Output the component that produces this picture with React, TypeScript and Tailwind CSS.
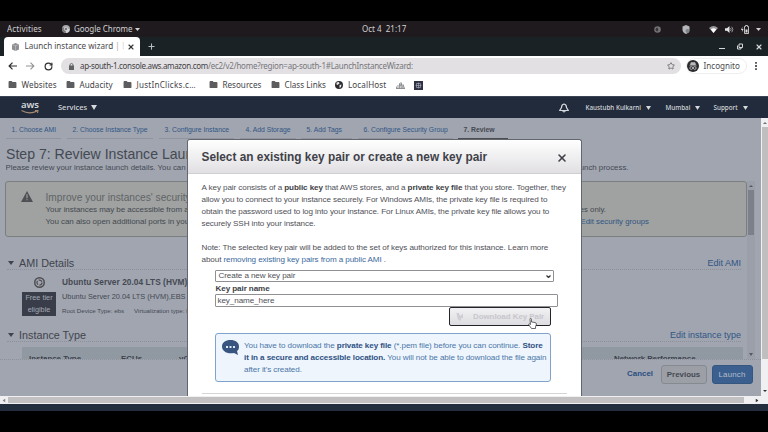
import type { ReactNode } from "react";
import { Star, RotateCw, Plus, X } from "lucide-react";

const UI = "font-['Noto_Sans',sans-serif]";
const LINK = "text-[#315584]";

function Down({ className = "" }: { className?: string }) {
  return (
    <svg viewBox="0 0 10 8" className={className} fill="currentColor" preserveAspectRatio="none">
      <path d="M0 0H10L5 8Z" />
    </svg>
  );
}

function Folder({ label, width, text }: { label: string; width: string; text: string }) {
  return (
    <div className={`flex shrink-0 items-center ${width}`}>
      <svg viewBox="0 0 9 8" className="mr-[4.5px] h-[7px] w-[9px]" fill="#5d5d60">
        <path d="M0 1Q0 0 1 0H3.6L4.6 1.2H8Q9 1.2 9 2.2V7Q9 8 8 8H1Q0 8 0 7Z" />
      </svg>
      <span className={text}>{label}</span>
    </div>
  );
}

function SystemBar() {
  return (
    <div className={`flex h-[16px] items-center bg-[#1e1a1e] text-[8px] leading-[16px] text-[#d2d0d2] ${UI}`}>
      <span className="w-[55px] pl-[7px] tracking-[0.15px]">Activities</span>
      <svg viewBox="0 0 16 16" className="ml-[7px] h-[8px] w-[8px]">
        <circle cx="8" cy="8" r="8" fill="#a9a8aa" />
        <path d="M8 8L1 4A8 8 0 0 0 7 16Z" fill="#77767a" />
        <path d="M8 8H15A8 8 0 0 1 8 16Z" fill="#d5d4d6" />
        <circle cx="8" cy="8" r="3.4" fill="#77767a" stroke="#eee" strokeWidth="1.2" />
      </svg>
      <span className="ml-[4px] w-[61px] tracking-[-0.05px]">Google Chrome</span>
      <Down className="h-[3px] w-[5px]" />
      <span className="ml-[222px] w-[150px] whitespace-pre">Oct 4  21:17</span>
      <div className="ml-[142px] flex items-center">
        <svg viewBox="0 0 14 14" className="h-[7px] w-[7px]">
          <circle cx="7" cy="7" r="6.5" fill="#777478" />
          <path d="M7 3A4 4 0 0 0 7 11L9 8Z" fill="#3b383c" />
        </svg>
        <svg viewBox="0 0 16 18" className="ml-[21px] h-[9px] w-[8px]">
          <path d="M8 0L15 3V9Q15 15 8 18Q1 15 1 9V3Z" fill="#b4b6ba" />
          <circle cx="11" cy="12" r="4" fill="#7d858c" />
        </svg>
        <svg viewBox="0 0 18 14" className="ml-[19px] h-[7px] w-[9px]">
          <path d="M0 4Q9 -4 18 4L9 14Z" fill="#9a989b" />
          <path d="M3.5 6.5Q9 2 14.5 6.5L9 14Z" fill="#fff" />
        </svg>
        <svg viewBox="0 0 18 14" className="ml-[7px] h-[7px] w-[9px]" fill="#e6e5e6">
          <path d="M0 4.5H4L9 0V14L4 9.5H0Z" />
          <path d="M11 4Q13.5 7 11 10M13.5 1.5Q18 7 13.5 12.5" fill="none" stroke="#aaa" strokeWidth="1.7" />
        </svg>
        <svg viewBox="0 0 16 18" className="ml-[7px] h-[9px] w-[8px]">
          <path d="M3 3L0 10H2.5L1.5 15L5 8H2.5Z" fill="#ddd" />
          <path d="M9 1H13V3H15V17H7V3H9Z" fill="none" stroke="#ddd" strokeWidth="1.7" />
          <path d="M9 9H13V15H9Z" fill="#ddd" />
        </svg>
        <Down className="ml-[7px] h-[3px] w-[5px]" />
      </div>
    </div>
  );
}

function TabStrip() {
  return (
    <div className={`flex h-[19px] bg-[#1b2226] pl-[4px] ${UI}`}>
      <div className="flex h-[19px] w-[136px] items-center rounded-t-[4px] bg-white pl-[7px] text-[8.1px] text-[#4a4a4d]">
        <svg viewBox="0 0 16 16" className="h-[8px] w-[9px]">
          <path d="M8 0L15 3V13L8 16L1 13V3Z" fill="#8f8f91" />
          <path d="M8 5V16M1 3L8 5.5L15 3" stroke="#c5c5c7" fill="none" strokeWidth="1.3" />
        </svg>
        <span className="ml-[4.5px] w-[99px] overflow-hidden whitespace-nowrap">
          Launch instance wizard <span className="text-[#aaa]">| </span>
          <span className="text-[#ddd]">E</span>
        </span>
        <X className="ml-[3px] h-[8px] w-[8px] text-[#333]" strokeWidth={3.2} />
      </div>
      <Plus className="mt-[5px] ml-[7px] h-[9px] w-[9px] text-[#b9bdbf]" strokeWidth={2.8} />
      <div className="ml-auto flex items-center pr-[5px] text-[#d4d6d7]">
        <div className="mt-[4px] h-[1.5px] w-[6px] bg-current" />
        <svg viewBox="0 0 12 12" className="ml-[12px] h-[7px] w-[6px]" fill="none" stroke="currentColor" strokeWidth="2">
          <path d="M4 1H11V8H4ZM1 4V11H8V8" />
        </svg>
        <X className="ml-[12px] h-[8px] w-[8px]" strokeWidth={3.5} />
      </div>
    </div>
  );
}

function Toolbar() {
  return (
    <div className={`flex h-[20px] items-center bg-white ${UI}`}>
      <svg viewBox="0 0 16 14" className="ml-[8px] h-[8px] w-[9px]" fill="none" stroke="#2f2f31" strokeWidth="2.2">
        <path d="M16 7H2M8 1L2 7L8 13" />
      </svg>
      <svg viewBox="0 0 16 14" className="ml-[9px] h-[8px] w-[9px]" fill="none" stroke="#949496" strokeWidth="2">
        <path d="M0 7H14M8 1L14 7L8 13" />
      </svg>
      <RotateCw className="ml-[9px] h-[9px] w-[9px] text-[#2f2f31]" strokeWidth={3.2} />
      <div className="ml-[8px] flex h-[16px] w-[620px] items-center rounded-full bg-[#e2e0e3] pl-[8px] text-[8px] text-[#77777b]">
        <svg viewBox="0 0 10 14" className="h-[7px] w-[5px]">
          <path d="M0 5H10V14H0Z" fill="#626265" />
          <path d="M2 6V4Q2 1 5 1T8 4V6" fill="none" stroke="#626265" strokeWidth="1.7" />
        </svg>
        <span className="ml-[6px] w-[587px] whitespace-nowrap tracking-[-0.25px]">
          <span className="tracking-[-0.33px] text-[#424246]">ap-south-1.console.aws.amazon.com</span>/ec2/v2/home?region=ap-south-1#LaunchInstanceWizard:
        </span>
        <Star className="h-[8px] w-[8px] shrink-0 text-[#666]" strokeWidth={2.5} />
      </div>
      <div className="ml-[5px] flex h-[16px] w-[61px] items-center rounded-full border border-[#eeeef0] text-[8.1px] text-[#4a4a4e]">
        <svg viewBox="0 0 24 24" className="h-[12px] w-[12px] shrink-0">
          <circle cx="12" cy="12" r="12" fill="#2b2b2e" />
          <path d="M8 5H16L17.5 10H6.5ZM4.5 11.5H19.5" fill="#bbb" stroke="#bbb" />
          <circle cx="8.5" cy="16" r="2.8" fill="none" stroke="#ccc" strokeWidth="1.5" />
          <circle cx="15.5" cy="16" r="2.8" fill="none" stroke="#ccc" strokeWidth="1.5" />
        </svg>
        <span className="ml-[4.5px]">Incognito</span>
      </div>
      <svg viewBox="0 0 2 9" className="ml-[8px] h-[8px] w-[2px]" fill="#4a4a4d">
        <path d="M0 0H2V2H0ZM0 3.5H2V5.5H0ZM0 7H2V9H0Z" />
      </svg>
    </div>
  );
}

function Bookmarks() {
  return (
    <div className={`flex h-[20px] items-center bg-white pb-[2px] pl-[8px] text-[8.1px] text-[#444448] ${UI}`}>
      <Folder label="Websites" width="w-[58px]" text="tracking-[0.12px]" />
      <Folder label="Audacity" width="w-[57px]" text="tracking-[0.05px]" />
      <Folder label="JustInClicks.c…" width="w-[86px]" text="tracking-[0.25px]" />
      <Folder label="Resources" width="w-[62px]" text="" />
      <Folder label="Class Links" width="w-[64px]" text="tracking-[0.03px]" />
      <svg viewBox="0 0 16 16" className="h-[8px] w-[8px]">
        <circle cx="8" cy="8" r="8" fill="#2c2c2f" />
        <path d="M3 3L8 2L9 5L5 8L3 7ZM9 8L13 7L12 12L9 14Z" fill="#e8e8e8" />
      </svg>
      <span className="ml-[5px] w-[48px] tracking-[0.1px]">LocalHost</span>
      <svg viewBox="0 0 18 14" className="h-[7px] w-[9px]" fill="none" stroke="#77777a" strokeWidth="1.5">
        <path d="M1 13V9M4 13V6M7 13V3L9 8M10 13V1L12 9V13M14 13V5L17 13M0 13H18" />
      </svg>
      <svg viewBox="0 0 18 18" className="ml-[9px] h-[9px] w-[9px]">
        <path d="M0 0H18V18H0Z" fill="#2e3244" />
        <path d="M9 3V15M3 9H15M5 5H13V13H5Z" stroke="#a7abb9" fill="none" strokeWidth="1.3" />
      </svg>
    </div>
  );
}

function AwsNav() {
  return (
    <div className={`flex h-[22px] items-center border-t border-[#3c4454] bg-[#222b3b] text-[#d5d8dc] ${UI}`}>
      <div className="ml-[21px] flex w-[37px] flex-col">
        <span className="h-[8px] text-[9.5px] leading-[6px] font-semibold tracking-[-0.1px]">aws</span>
        <svg viewBox="0 0 36 8" className="h-[4px] w-[18px]" fill="none" stroke="#a58b74" strokeWidth="2.2">
          <path d="M1 1Q17 10 32 2M28 1H34L33 6" />
        </svg>
      </div>
      <span className="w-[33px] text-[7.5px] font-medium">Services</span>
      <Down className="h-[5px] w-[6px]" />
      <svg viewBox="0 0 20 20" className="ml-[462px] h-[10px] w-[10px]" fill="none" stroke="currentColor" strokeWidth="2.4">
        <path d="M10 2Q5 3 5 9L1.5 15H18.5L15 9Q15 3 10 2ZM7 15Q10 21 13 15" />
      </svg>
      <div className="ml-[16.5px] flex items-center text-[6.3px] font-medium">
        <span className="w-[60px]">Kaustubh Kulkarni</span>
        <Down className="h-[4px] w-[5px]" />
        <span className="ml-[15px] w-[29px]">Mumbai</span>
        <Down className="h-[4px] w-[5px]" />
        <span className="ml-[14px] w-[29px]">Support</span>
        <Down className="h-[4px] w-[5px]" />
      </div>
    </div>
  );
}

const steps: [string, string, string, boolean][] = [
  ["1. Choose AMI", "w-[55px]", "w-[61px]", false],
  ["2. Choose Instance Type", "w-[86px]", "w-[92px]", false],
  ["3. Configure Instance", "w-[75px]", "w-[81px]", false],
  ["4. Add Storage", "w-[56px]", "w-[61px]", false],
  ["5. Add Tags", "w-[51px]", "w-[57px]", false],
  ["6. Configure Security Group", "w-[95px]", "w-[100px]", false],
  ["7. Review", "w-[50px]", "w-[52px]", true],
];

function SectionHead({ title, edit }: { title: string; edit: string }) {
  return (
    <div className="mr-[6px] ml-[7px] flex h-[15px] shrink-0 items-end border-b border-dotted border-[#8b909b] leading-[12px] text-[#41444c]">
      <Down className="mb-[4px] ml-[1px] h-[4px] w-[6px]" />
      <span className="ml-[5px] text-[10.8px]">{title}</span>
      <span className={`ml-auto text-[9px] ${LINK}`}>{edit}</span>
    </div>
  );
}

function ReviewPage() {
  return (
    <div className="flex h-[278px] w-[761px] flex-col bg-[#a0a5b0] text-[#454952]">
      <div className="flex h-[21px] pl-[6px] text-[6.8px]">
        {steps.map(([label, line, cell, active]) => (
          <div key={label} className={cell}>
            <div
              className={`h-[21px] border-b pl-[5.5px] leading-[23px] whitespace-nowrap ${line} ${
                active ? "border-[#4b4c50] font-bold text-[#454952]" : "border-[#91949c] text-[#315584]"
              }`}
            >
              {label}
            </div>
          </div>
        ))}
      </div>
      <div className="mt-[7px] h-[16px] pl-[6px] text-[14.1px] leading-[16px] whitespace-nowrap">Step 7: Review Instance Launch</div>
      <div className="flex h-[19px] pl-[5.5px] text-[7.85px] leading-[11px] whitespace-nowrap">
        <span className="w-[485px] overflow-hidden">Please review your instance launch details. You can go back to edit changes for each section. Click</span>
        <span className="w-[138px] text-right">complete the launch process.</span>
      </div>
      <div className="flex h-[178px]">
        <div className="flex w-[747px] flex-col overflow-hidden">
          <div className="ml-[5px] flex h-[56px] shrink-0 rounded-[3px] border border-[#7c7f80] bg-[#9fa2a0]">
            <svg viewBox="0 0 22 20" className="mt-[9px] ml-[15px] h-[11px] w-[12px]">
              <path d="M11 0L22 20H0Z" fill="#4e5053" />
              <path d="M10 6H12V13H10ZM10 15H12V17H10Z" fill="#a4a7a5" />
            </svg>
            <div className="ml-[12.5px] w-[480px] pt-[9px] text-[8px] leading-[12px] whitespace-nowrap">
              <div className="h-[13px] text-[10.2px] leading-[13px] text-[#606468]">Improve your instances' security. Your security group is open to the world.</div>
              <div className="tracking-[-0.05px]">Your instances may be accessible from any IP address. We recommend that you update your security group</div>
              <div className="tracking-[-0.05px]">You can also open additional ports in your security group to facilitate access to the application.</div>
            </div>
            <div className="mt-[22px] ml-auto mr-[97px] text-right text-[7.8px] leading-[12px] whitespace-nowrap">
              <div className="pr-[43px]">IP addresses only.</div>
              <div className={LINK}>Edit security groups</div>
            </div>
          </div>
          <div className="mt-[18px] shrink-0">
            <SectionHead title="AMI Details" edit="Edit AMI" />
          </div>
          <div className="flex h-[57px] shrink-0 pt-[7px] pl-[22px] whitespace-nowrap">
            <div className="flex w-[34px] flex-col items-center">
              <svg viewBox="0 0 22 22" className="h-[11px] w-[11px]">
                <circle cx="11" cy="11" r="9.5" fill="#a0a5b0" stroke="#4e4c50" strokeWidth="3" />
                <circle cx="11" cy="11" r="5" fill="none" stroke="#4e4c50" strokeWidth="2.5" strokeDasharray="8 2.5" />
              </svg>
              <div className="mt-[4px] h-[24px] w-[34px] bg-[#393d4a] text-center text-[7.3px] leading-[12px] text-[#a3a8b3]">
                Free tier
                <br />
                eligible
              </div>
            </div>
            <div className="pl-[6px]">
              <div className="h-[12px] text-[8.3px] leading-[11px] font-bold tracking-[0.05px]">Ubuntu Server 20.04 LTS (HVM), SSD Volume Type</div>
              <div className="mt-[1px] h-[14px] text-[7.4px] leading-[14px]">Ubuntu Server 20.04 LTS (HVM),EBS General Purpose (SSD) Volume Type.</div>
              <div className="mt-px flex text-[6.2px] leading-[12px]">
                <span className="w-[72px]">Root Device Type: ebs</span>
                <span>Virtualization type: hvm</span>
              </div>
            </div>
          </div>
          <SectionHead title="Instance Type" edit="Edit instance type" />
          <div className="mt-[5px] mr-[4px] ml-[22px] flex h-[12px] shrink-0 overflow-hidden bg-[#9099a2] pl-[7px] text-[7.9px] leading-[23px] font-bold text-[#3c414b]">
            <span className="w-[92px]">Instance Type</span>
            <span className="w-[58px]">ECUs</span>
            <span className="w-[435px]">vCPUs</span>
            <span>Network Performance</span>
          </div>
        </div>
        <div className="flex w-[8px] flex-col items-center bg-[#9a9fa9] text-[#555962]">
          <Down className="mt-[4px] h-[2px] w-[4px] rotate-180" />
          <div className="mt-[3px] h-[45px] w-[6px] bg-[#7c8089]" />
          <Down className="mt-auto mb-[3px] h-[3px] w-[4px]" />
        </div>
      </div>
      <div className="flex h-[37px] items-start justify-end border-t border-dotted border-[#8b909b] pt-[5px] pr-[8.5px] text-[7.9px] leading-[18px] font-bold">
        <span className="mr-[7.5px] text-[#2a4f81]">Cancel</span>
        <span className="mr-[5px] h-[19px] w-[46px] rounded-[3px] border border-[#858990] bg-[#9ca0a6] text-center">Previous</span>
        <span className="h-[19px] w-[41px] rounded-[3px] border border-[#35577f] bg-[#3b608f] text-center font-normal tracking-[0.2px] text-[#b3bdcb]">Launch</span>
      </div>
    </div>
  );
}

function B({ children }: { children: ReactNode }) {
  return <span className="font-bold text-[#3e3f46]">{children}</span>;
}

function KeyPairDialog() {
  return (
    <div className="absolute top-[21px] left-[187px] flex h-[257px] w-[395px] flex-col rounded-t-[3px] border border-b-0 border-[#62666e] bg-white text-[8.1px] leading-[11.9px] tracking-[-0.093px] whitespace-nowrap text-[#505058]">
      <div className="flex h-[34px] shrink-0 items-center justify-between rounded-t-[3px] border-b border-[#cfced2] bg-linear-to-b from-white to-[#e1dfe2] pr-[13px] pl-[13.5px] text-[#404148]">
        <span className="pt-[3px] text-[11.85px] font-bold tracking-normal">Select an existing key pair or create a new key pair</span>
        <X className="mt-[2px] h-[12px] w-[12px]" strokeWidth={3.2} />
      </div>
      <div className="pt-[8px] pl-[13.5px]">
        <div>A key pair consists of a <B>public key</B> that AWS stores, and a <B>private key file</B> that you store. Together, they</div>
        <div>allow you to connect to your instance securely. For Windows AMIs, the private key file is required to</div>
        <div>obtain the password used to log into your instance. For Linux AMIs, the private key file allows you to</div>
        <div>securely SSH into your instance.</div>
        <div className="mt-[12px]">Note: The selected key pair will be added to the set of keys authorized for this instance. Learn more</div>
        <div>about <span className="text-[#3d699d]">removing existing key pairs from a public AMI</span> .</div>
      </div>
      <div className="ml-[27px] pt-[5px]">
        <div className="flex h-[12px] w-[339px] items-center justify-between rounded-[1px] border border-[#8f8f94] pr-[2px] pl-[2.5px]">
          <span>Create a new key pair</span>
          <svg viewBox="0 0 10 6" className="h-[3px] w-[5px]" fill="none" stroke="#333" strokeWidth="2.5">
            <path d="M1 1L5 5L9 1" />
          </svg>
        </div>
        <div className="h-[12px] pl-[0.5px] leading-[13px]"><B>Key pair name</B></div>
        <div className="h-[13px] w-[343px] rounded-[1px] border border-[#8f8f94] pl-[1.5px] leading-[11px]">key_name_here</div>
        <div className="relative ml-[234px] flex h-[19px] w-[102px] items-center rounded-[2px] border-[1.5px] border-[#242428] bg-linear-to-b from-[#f1f0f2] to-[#dddce0] pl-[6px] text-[7.9px] font-bold text-[#c8c7cc]">
          <svg viewBox="0 0 18 18" className="h-[9px] w-[9px]" fill="#cfced3">
            <path d="M1 2H6V4L9 8L14 3V12H10V17H6L3 12Z" />
          </svg>
          <span className="ml-[8px] tracking-[-0.02px]">Download Key Pair</span>
          <svg viewBox="0 0 20 22" className="absolute top-[10px] left-[77px] h-[11px] w-[11px]">
            <path d="M6 1Q8 1 8 3V8L15 9Q18 10 18 12L16 18V21H8L2 13Q2 10 6 13L5 3Q5 1 6 1Z" fill="#fff" stroke="#444" strokeWidth="1.6" />
          </svg>
        </div>
        <div className="mt-[7px] flex h-[49px] w-[336px] rounded-[3px] border border-[#7fa3cb] bg-[#eef5fc] pt-[6px] pl-[6px] text-[#4b75a8]">
          <svg viewBox="0 0 34 30" className="h-[15px] w-[17px]">
            <path d="M17 0C27 0 34 5 34 13C34 17 33 20 30 22L32 30L24 26C10 29 0 22 0 13C0 5 7 0 17 0Z" fill="#38557f" />
            <path d="M8 12H12V16H8ZM15 12H19V16H15ZM22 12H26V16H22Z" fill="#dce8f5" />
          </svg>
          <div className="pl-[5px]">
            <div>You have to download the <b className="text-[#2f5183]">private key file</b> (*.pem file) before you can continue. <b className="text-[#2f5183]">Store</b></div>
            <div><b className="text-[#2f5183]">it in a secure and accessible location.</b> You will not be able to download the file again</div>
            <div>after it's created.</div>
          </div>
        </div>
      </div>
      <div className="mt-[11px] ml-[14px] h-px w-[365px] bg-[#d5d5d8]" />
    </div>
  );
}

export default function App() {
  return (
    <div className="flex h-[432px] w-[768px] flex-col overflow-hidden bg-black pt-[21px] font-['Liberation_Sans',Arial,sans-serif]">
      <SystemBar />
      <TabStrip />
      <Toolbar />
      <Bookmarks />
      <AwsNav />
      <div className="relative flex h-[278px]">
        <ReviewPage />
        <div className="flex w-[7px] flex-col items-center bg-[#f0f0f2] text-[#707074]">
          <Down className="mt-[4px] h-[2px] w-[4px] rotate-180" />
          <div className="mt-[3px] h-[232px] w-[6px] bg-[#c1bebf]" />
          <Down className="mt-auto mb-[4px] h-[2px] w-[4px] text-[#333]" />
        </div>
        <KeyPairDialog />
      </div>
      <div className="flex h-[8px] items-center bg-[#f0f0f2]">
        <Down className="ml-[2px] h-[3px] w-[4px] rotate-90 text-[#88888c]" />
        <div className="ml-[2px] h-[6px] w-[736px] bg-[#c3c0c2]" />
        <Down className="ml-[11px] h-[3px] w-[4px] -rotate-90 text-[#333]" />
      </div>
      <div className="h-[7px] bg-[#222d3d]" />
    </div>
  );
}
